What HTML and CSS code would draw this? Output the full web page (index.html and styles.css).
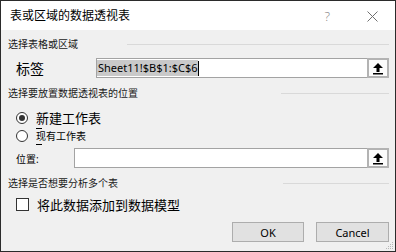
FILE: index.html
```html
<!DOCTYPE html>
<html lang="zh-CN">
<head>
<meta charset="utf-8">
<title>表或区域的数据透视表</title>
<link rel="stylesheet" href="styles.css">
</head>
<body>
<div class="window">
  <div class="titlebar">
    <span class="title">表或区域的数据透视表</span>
    <span class="help">?</span>
    <span class="close"><svg width="11" height="11" viewBox="0 0 11 11"><path d="M0.5 0.5 L10.5 10.5 M10.5 0.5 L0.5 10.5" stroke="#707070" stroke-width="1" fill="none"/></svg></span>
  </div>
  <div class="body">
    <div class="group-head gh-1"><span class="gh-text">选择表格或区域</span><i class="rule rule-1"></i></div>
    <div class="field-row fr-1">
      <span class="field-label label-lg lw-1">标签</span>
      <div class="input"><span class="sel">Sheet11!$B$1:$C$6</span><span class="caret"></span></div>
      <span class="pick"><svg width="12" height="13" viewBox="0 0 12 13"><path d="M6 1 L11 6 L7.5 6 L7.5 10 L4.5 10 L4.5 6 L1 6 Z" fill="#000"/><rect x="1" y="11" width="10" height="1.5" fill="#000"/></svg></span>
    </div>
    <div class="group-head gh-2"><span class="gh-text">选择要放置数据透视表的位置</span><i class="rule rule-2"></i></div>
    <div class="option-row or-1">
      <span class="radio checked"></span>
      <span class="opt-label opt-lg"><span class="ak">新</span>建工作表</span>
    </div>
    <div class="option-row or-2">
      <span class="radio"></span>
      <span class="opt-label opt-sm"><span class="ak">现</span>有工作表</span>
    </div>
    <div class="field-row fr-2">
      <span class="field-label label-sm lw-2">位置:</span>
      <div class="input"></div>
      <span class="pick"><svg width="12" height="13" viewBox="0 0 12 13"><path d="M6 1 L11 6 L7.5 6 L7.5 10 L4.5 10 L4.5 6 L1 6 Z" fill="#000"/><rect x="1" y="11" width="10" height="1.5" fill="#000"/></svg></span>
    </div>
    <div class="group-head gh-3"><span class="gh-text">选择是否想要分析多个表</span><i class="rule rule-3"></i></div>
    <div class="option-row cr">
      <span class="checkbox"></span>
      <span class="opt-label opt-lg">将此数据添加到数据模型</span>
    </div>
    <div class="actions">
      <span class="btn btn-ok">OK</span>
      <span class="btn btn-cancel">Cancel</span>
    </div>
  </div>
  <svg class="grip" width="8" height="8" viewBox="0 0 8 8">
    <rect x="6" y="0" width="1" height="1" fill="#b8b8b8"/>
    <rect x="4" y="2" width="1" height="1" fill="#b8b8b8"/>
    <rect x="6" y="2" width="1" height="1" fill="#b8b8b8"/>
    <rect x="2" y="4" width="1" height="1" fill="#b8b8b8"/>
    <rect x="4" y="4" width="1" height="1" fill="#b8b8b8"/>
    <rect x="6" y="4" width="1" height="1" fill="#b8b8b8"/>
    <rect x="0" y="6" width="1" height="1" fill="#b8b8b8"/>
    <rect x="2" y="6" width="1" height="1" fill="#b8b8b8"/>
    <rect x="4" y="6" width="1" height="1" fill="#b8b8b8"/>
    <rect x="6" y="6" width="1" height="1" fill="#b8b8b8"/>
  </svg>
</div>
</body>
</html>
```

FILE: styles.css
```css
* { box-sizing: border-box; }
html, body { margin: 0; padding: 0; }
body {
  font-family: "Noto Sans", "Noto Sans CJK SC", sans-serif;
  color: #000;
  background: #f0f0f0;
}
.window {
  position: relative;
  width: 396px;
  height: 252px;
  border: 1px solid #2b2b2b;
  background: #f0f0f0;
  overflow: hidden;
}
.titlebar {
  display: flex;
  align-items: center;
  height: 29px;
  background: #fff;
  padding-left: 9px;
}
.title {
  flex: 1;
  font-size: 12px;
  line-height: 14px;
  margin-top: 1px;
}
.help {
  font-size: 13px;
  line-height: 14px;
  color: #8a8a8a;
  margin-right: 37px;
  font-weight: 300;
}
.close {
  display: flex;
  margin-right: 17px;
  margin-top: 1px;
}
.body {
  display: flex;
  flex-direction: column;
}
.group-head {
  display: flex;
  align-items: center;
  height: 12px;
  padding-left: 7px;
  padding-right: 6px;
}
.gh-text {
  font-size: 10px;
  line-height: 12px;
  color: #1a1a1a;
}
.rule {
  display: block;
  height: 1px;
  background: #d9d9d9;
  margin-left: auto;
}
.rule-1 { width: 262px; }
.rule-2 { width: 108px; }
.rule-3 { width: 106px; }
.gh-1 { margin-top: 8px; }
.gh-2 { margin-top: 9px; }
.gh-3 { margin-top: 9px; }
.field-row {
  display: flex;
  align-items: stretch;
  height: 20px;
  padding-left: 15px;
  padding-right: 6px;
}
.fr-1 { margin-top: 8px; }
.fr-2 { margin-top: 4px; }
.field-label {
  display: flex;
  align-items: center;
  flex: none;
}
.label-lg { font-size: 14px; }
.label-sm { font-size: 10px; padding-top: 1px; }
.lw-1 { width: 80px; }
.lw-2 { width: 58px; }
.input {
  flex: 1;
  display: flex;
  align-items: center;
  background: #fff;
  border: 1px solid #a3a3a3;
  border-right: none;
  padding-left: 0;
}
.sel {
  font-size: 11px;
  line-height: 16px;
  background: #c9c9c9;
  padding: 0 0 0 1px;
}
.caret {
  width: 1px;
  height: 15px;
  background: #000;
}
.pick {
  flex: none;
  width: 22px;
  display: flex;
  align-items: center;
  justify-content: center;
  background: #fbfbfb;
  border: 2px solid #b3b3b3;
}
.option-row {
  display: flex;
  align-items: center;
  height: 17px;
  padding-left: 15px;
  gap: 8px;
}
.or-1 { margin-top: 10px; }
.or-2 { margin-top: 1px; }
.cr { margin-top: 8px; height: 15px; }
.radio {
  position: relative;
  width: 12px;
  height: 12px;
  border: 1px solid #333;
  border-radius: 50%;
  background: #fff;
  flex: none;
}
.radio.checked::after {
  content: "";
  position: absolute;
  left: 2px;
  top: 2px;
  width: 6px;
  height: 6px;
  border-radius: 50%;
  background: #333;
}
.checkbox {
  width: 13px;
  height: 13px;
  border: 1px solid #333;
  background: #fff;
  flex: none;
}
.opt-label { line-height: 16px; }
.opt-lg { font-size: 13px; }
.opt-sm { font-size: 10px; }
.ak { position: relative; }
.ak::after {
  content: "";
  position: absolute;
  left: 0;
  bottom: -2px;
  width: 6px;
  height: 1px;
  background: #000;
}
.actions {
  display: flex;
  justify-content: flex-end;
  gap: 12px;
  padding-right: 6px;
  margin-top: 10px;
}
.btn {
  display: flex;
  align-items: center;
  justify-content: center;
  height: 20px;
  background: #e1e1e1;
  border: 1px solid #adadad;
  font-size: 11px;
}
.btn-ok { width: 72px; }
.btn-cancel { width: 73px; }
.grip {
  position: absolute;
  right: 1px;
  bottom: 1px;
}
```
